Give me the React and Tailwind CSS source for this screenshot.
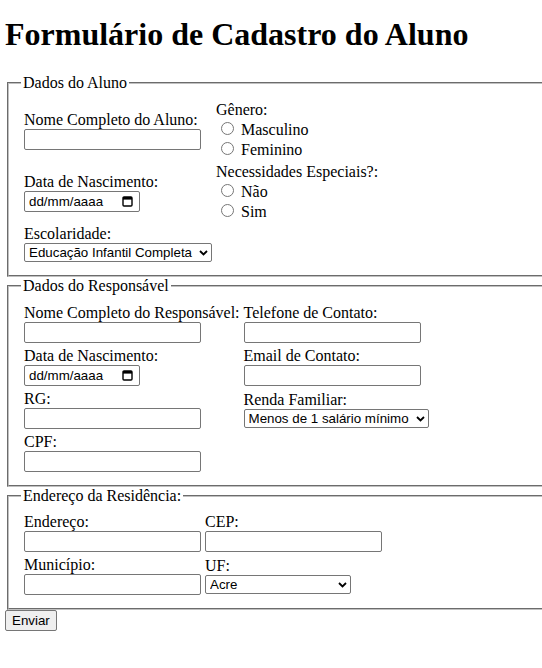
import React from "react";

const sans = "font-['Liberation_Sans',Arial,sans-serif] text-[13.3333px]";
const inputCls = `w-[177px] h-[21px] border border-[#767676] rounded-[2px] px-[2px] py-[1px] bg-white align-baseline ${sans}`;

function TextInput() {
  return <input type="text" className={inputCls} />;
}

function DateInput() {
  return (
    <span className={`inline-flex items-center justify-between w-[116px] h-[21px] border border-[#767676] rounded-[2px] pl-[4px] pr-[6px] bg-white align-baseline ${sans}`}>
      <span>dd/mm/aaaa</span>
      <svg width="11" height="12" viewBox="0 0 11 12" className="inline-block">
        <rect x="1" y="2" width="9" height="9" rx="1" fill="none" stroke="#000" strokeWidth="1.4" />
        <rect x="1" y="2" width="9" height="2.6" fill="#000" />
      </svg>
    </span>
  );
}

function Select({ w, value, options }) {
  return (
    <span className="relative inline-block align-baseline">
      <select
        defaultValue={value}
        className={`appearance-none block h-[19px] border border-[#767676] rounded-[2px] pl-[4px] pr-[18px] bg-white ${sans} ${w}`}
      >
        {options.map((o) => (
          <option key={o}>{o}</option>
        ))}
      </select>
      <svg width="9" height="6" viewBox="0 0 9 6" className="absolute right-[4px] top-[7px] pointer-events-none">
        <path d="M1 1 L4.5 4.5 L8 1" fill="none" stroke="#000" strokeWidth="1.8" />
      </svg>
    </span>
  );
}

function Radio({ name, label }) {
  return (
    <div>
      <input type="radio" name={name} className="m-[3px_3px_0_5px] w-[13px] h-[13px] align-baseline" /> {label}
    </div>
  );
}

function Field({ label, children }) {
  return (
    <div>
      <label>{label}</label>
      <br />
      {children}
    </div>
  );
}

function Fieldset({ legend, children }) {
  return (
    <fieldset className="mx-[2px] w-[560px] border-2 [border-style:groove] border-[#c0c0c0] pt-[5.6px] px-[12px] pb-[10px]">
      <legend className="px-[2px]">{legend}</legend>
      {children}
    </fieldset>
  );
}

export default function App() {
  return (
    <div className="w-[542px] min-h-[668px] overflow-hidden bg-white text-black px-[5px] py-px font-['Liberation_Serif','Times_New_Roman',serif] text-[16px] leading-[normal]">
      <h1 className="text-[32px] font-bold mt-[15px] mb-[21.44px] leading-[normal]">Formulário de Cadastro do Aluno</h1>
      <form>
        <Fieldset legend="Dados do Aluno">
          <div className="grid grid-cols-[auto_auto] justify-start items-center gap-[4px] p-[3px]">
            <Field label="Nome Completo do Aluno:">
              <TextInput />
            </Field>
            <div>
              <div>Gênero:</div>
              <Radio name="genero" label="Masculino" />
              <Radio name="genero" label="Feminino" />
            </div>
            <Field label="Data de Nascimento:">
              <DateInput />
            </Field>
            <div>
              <div>Necessidades Especiais?:</div>
              <Radio name="nec" label="Não" />
              <Radio name="nec" label="Sim" />
            </div>
            <Field label="Escolaridade:">
              <Select
                w="w-[188px]"
                value="Educação Infantil Completa"
                options={["Educação Infantil Completa", "Ensino Fundamental Incompleto", "Ensino Fundamental Completo"]}
              />
            </Field>
            <div />
          </div>
        </Fieldset>
        <Fieldset legend="Dados do Responsável">
          <div className="grid grid-cols-[auto_auto] justify-start items-center gap-[4px] p-[3px]">
            <Field label="Nome Completo do Responsável:">
              <TextInput />
            </Field>
            <Field label="Telefone de Contato:">
              <TextInput />
            </Field>
            <Field label="Data de Nascimento:">
              <DateInput />
            </Field>
            <Field label="Email de Contato:">
              <TextInput />
            </Field>
            <Field label="RG:">
              <TextInput />
            </Field>
            <Field label="Renda Familiar:">
              <Select
                w="w-[185px]"
                value="Menos de 1 salário mínimo"
                options={["Menos de 1 salário mínimo", "De 1 a 3 salários mínimos", "Mais de 3 salários mínimos"]}
              />
            </Field>
            <Field label="CPF:">
              <TextInput />
            </Field>
            <div />
          </div>
        </Fieldset>
        <Fieldset legend="Endereço da Residência:">
          <div className="grid grid-cols-[auto_auto] justify-start items-center gap-[4px] p-[3px]">
            <Field label="Endereço:">
              <TextInput />
            </Field>
            <Field label="CEP:">
              <TextInput />
            </Field>
            <Field label="Município:">
              <TextInput />
            </Field>
            <Field label="UF:">
              <Select
                w="w-[146px]"
                value="Acre"
                options={["Acre", "Alagoas", "Amapá", "Amazonas", "Bahia", "Ceará", "Rio Grande do Norte"]}
              />
            </Field>
          </div>
        </Fieldset>
        <button type="submit" className={`mt-0 border border-[#767676] rounded-[2px] bg-[#efefef] px-[6px] py-px h-[21px] ${sans}`}>
          Enviar
        </button>
      </form>
    </div>
  );
}
